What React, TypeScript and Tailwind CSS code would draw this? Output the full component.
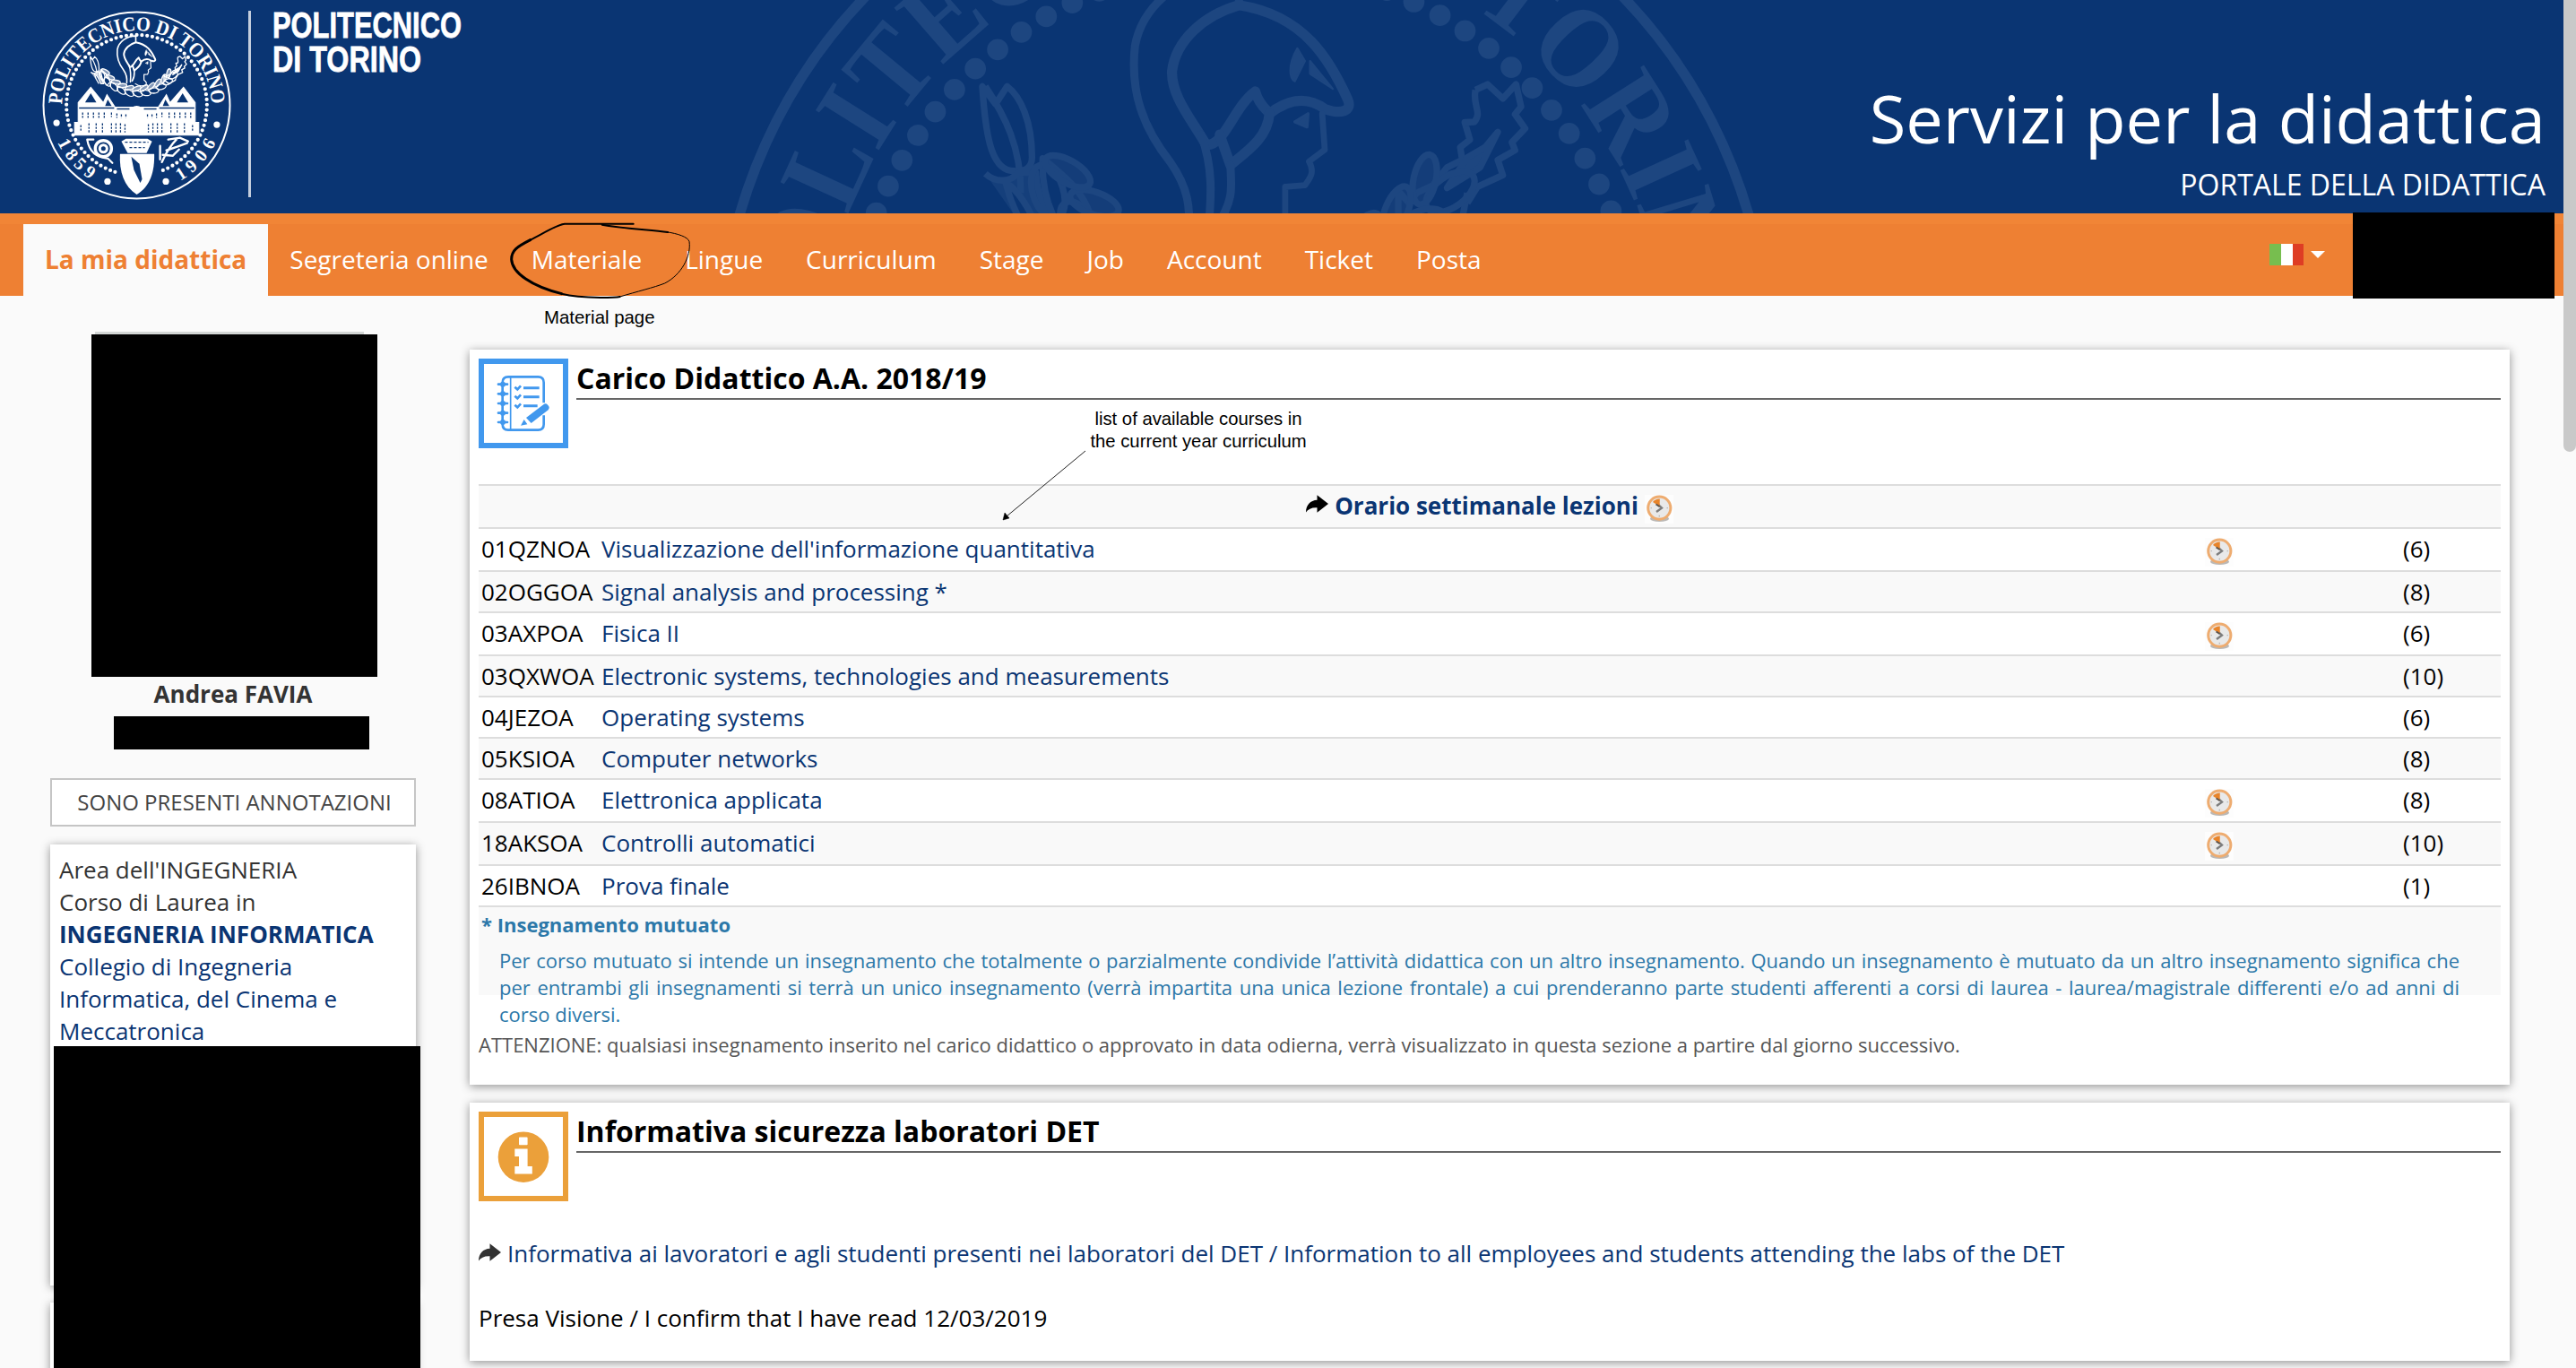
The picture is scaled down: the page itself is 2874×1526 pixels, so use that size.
import type { ReactNode } from "react";

const NAV = [
  "Segreteria online",
  "Materiale",
  "Lingue",
  "Curriculum",
  "Stage",
  "Job",
  "Account",
  "Ticket",
  "Posta",
];

type Course = { code: string; name: string; credits: number; clock?: boolean };

const COURSES: Course[] = [
  { code: "01QZNOA", name: "Visualizzazione dell'informazione quantitativa", credits: 6, clock: true },
  { code: "02OGGOA", name: "Signal analysis and processing *", credits: 8 },
  { code: "03AXPOA", name: "Fisica II", credits: 6, clock: true },
  { code: "03QXWOA", name: "Electronic systems, technologies and measurements", credits: 10 },
  { code: "04JEZOA", name: "Operating systems", credits: 6 },
  { code: "05KSIOA", name: "Computer networks", credits: 8 },
  { code: "08ATIOA", name: "Elettronica applicata", credits: 8, clock: true },
  { code: "18AKSOA", name: "Controlli automatici", credits: 10, clock: true },
  { code: "26IBNOA", name: "Prova finale", credits: 1 },
];

const DIGITS: [string, number][] = [
  ["1", 152],
  ["8", 143],
  ["5", 134],
  ["9", 125],
  ["1", 57],
  ["9", 48],
  ["0", 38],
  ["6", 28],
];

const LEAVES = Array.from({ length: 11 }, (_, i) => 36 + i * 10.8);

/* Full seal, or only its upper half when used as a cropped watermark. */
function Seal({ className, id, background, upper = false }: { className: string; id: string; background: string; upper?: boolean }) {
  return (
    <svg viewBox="-106 -106 212 212" className={className} fill="none" stroke="currentColor">
      <defs>
        <path id={id} d="M-83 0A83 83 0 0 1 83 0" />
      </defs>
      <circle r="103.5" strokeWidth="2" />
      <path d="M-24 74A78 78 0 1 1 24 74" strokeWidth="4.2" strokeLinecap="round" strokeDasharray="0 5.8" />
      <text fill="currentColor" stroke="none" fontSize="22.5" fontWeight="600" fontFamily="'Liberation Serif', serif">
        <textPath href={"#" + id} startOffset="1" textLength="258" lengthAdjust="spacingAndGlyphs">
          POLITECNICO DI TORINO
        </textPath>
      </text>

      {/* helmeted head */}
      <g strokeWidth="1.6" strokeLinejoin="round" strokeLinecap="round">
        <path d="M-1 -70V-77C-12 -77 -20 -70 -21.5 -62C-22.5 -53 -20 -46 -14.5 -39C-11 -34 -10.5 -30 -11 -25" />
        <path d="M-1 -70C-8 -68 -13.5 -63 -14.2 -57C-14.4 -52 -10 -47 -7.5 -42.5C-4 -42 -2 -50 2.2 -53C3 -50 5 -49 5 -48.6C8 -51 12 -52.5 16 -49.5C19 -48.5 21.5 -49 20.4 -51.5C17 -59 12 -68 -1 -70Z" strokeWidth="2" />
        <path d="M-4.8 -44.5L-2.7 -38.5C1 -41.5 4.6 -44 5 -48.6" strokeWidth="2" />
        <path d="M15.4 -48.6L15.9 -41.5L12.8 -39.2C14 -37 13 -36 12 -34.5L8.1 -34.2V-28C11 -26 12 -24 9 -22C5 -21 1 -22 -1.5 -24" strokeWidth="1.2" />
        <path d="M-8.5 -44.5C-6 -38 -6.5 -32 -7 -26M-2.7 -38.5C-2.5 -34 -2 -32 -5 -27" />
        <path d="M10.5 -61.5C8.5 -58 9 -55.5 10 -55L12 -59ZM13 -59L17.5 -53.5L13 -56.5Z" fill="currentColor" strokeWidth="0.4" />
        <path d="M10 -47L12.6 -48.6L12.4 -46Z" fill="currentColor" strokeWidth="0.6" />
      </g>

      {/* laurel and oak branches */}
      <g strokeWidth="1.3" strokeLinejoin="round">
        <path d="M-51.6 -54C-51 -45 -50 -38 -46 -37.4C-43 -37 -41.8 -38 -41.8 -40C-41.8 -47 -44 -52 -46.7 -54L-49 -50.5ZM-51 -54C-47 -48 -44 -42 -44 -33" />
        <path d="M-51 -36.8C-49 -35 -46 -35 -44.5 -37L-41 -37C-41 -33 -39 -29 -36.5 -24L-40 -24C-42 -30 -45 -34 -47 -35C-46 -31 -44 -27 -42 -24" fill="currentColor" fillOpacity="0.6" />
        <path d="M-39.7 -39.8C-35 -36 -31 -33 -29.5 -26L-33 -22C-38 -27 -40 -33 -39.7 -39.8Z" />
        <path d="M45.6 -53.3L48 -54.4L51 -51.6L53.6 -54.4L54.6 -50L53.4 -48.5L55.4 -45.7L52.8 -43L53.4 -41.4L50 -39.5L51 -36.5L46 -34.2L44 -31M45.6 -53.3C45 -50 47 -49 45.4 -47L43.5 -46.9L44.5 -43.5L42.6 -42L43 -39.5L40 -38L37.2 -34.5L34 -33L32.5 -31L30.4 -33.4V-28L36 -24L43 -28L44 -33" />
        <path d="M50 -45L46.5 -38L40 -34L44 -40L47.5 -42Z" fill="currentColor" />
        {LEAVES.map((a) => (
          <g key={a} transform={`translate(1 -62) rotate(${a})`}>
            <ellipse cx="49" cy="0" rx="3" ry="5.5" transform="rotate(18 49 0)" />
            <ellipse cx="43.5" cy="1" rx="2.2" ry="5" transform="rotate(-24 43.5 1)" fill="currentColor" fillOpacity="0.5" />
          </g>
        ))}
      </g>

      {!upper && (
        <>
          {DIGITS.map(([d, a]) => (
            <text
              key={d + a}
              transform={`rotate(${a - 90}) translate(0 97)`}
              textAnchor="middle"
              fill="currentColor"
              stroke="none"
              fontSize="20"
              fontWeight="700"
              fontFamily="'Liberation Serif', serif"
            >
              {d}
            </text>
          ))}
          <g fill="currentColor" stroke="none">
            <circle cx="-89" cy="19.5" r="3.6" />
            <circle cx="89" cy="21.5" r="3.6" />
            <circle cx="-32.4" cy="84.5" r="3.6" />
            <circle cx="32.4" cy="84.5" r="3.6" />
          </g>

          {/* castle */}
          <g fill="currentColor" strokeWidth="1">
            <path d="M-69 33V19H-65V-3L-51 -20L-37 -3L-33 -12L-24 2H24L33 -12L37 -3L52 -20L65 -3V19H69V33Z" />
            <path
              d="M-56 -4L-51 -12L-46 -4ZM-34 0L-32 -5L-29 0ZM46 -4L51 -12L56 -4ZM30 0L32 -5L35 0ZM-22 4H-8M8 4H22M-64 3H-25M25 3H64"
              fill={background}
              stroke={background}
              strokeWidth="1.4"
            />
            <path
              d="M-60 8V14M-54 8V14M-48 8V14M-42 8V14M-36 8V14M-28 8V13M-22 9V14M-17 10V14M-12 10V14M12 10V14M17 10V14M22 9V14M28 8V13M36 8V14M42 8V14M48 8V14M54 8V14M60 8V14M-62 22V29M-53 20V30M-45 20V30M-38 20V30M-28 20V30M-23 20V30M-18 20V30M-13 21V30M13 21V30M18 20V30M23 20V30M28 20V30M38 20V30M45 20V30M53 20V30M62 22V29"
              stroke={background}
              strokeWidth="1.3"
              strokeDasharray="2.4 1.4"
            />
            <circle cy="8" r="7.5" stroke="none" />
          </g>

          {/* snail, shield and wheat */}
          <g strokeWidth="2.2" strokeLinecap="round">
            <path d="M-55 38C-53 50 -46 58 -32 59L-27 64M-55 38H-48" />
            <circle cx="-37" cy="48" r="9" strokeWidth="3.4" />
            <circle cx="-37" cy="48" r="4" strokeWidth="3" />
          </g>
          <path d="M-17 40L-10 53H11L17 40L12 37H-12Z" fill="currentColor" stroke="none" />
          <path d="M-13 41H13M-8 47H9" stroke={background} strokeWidth="1.2" strokeDasharray="3 2" />
          <path d="M-18.5 54H19.5C20 74 15 90 0 99C-14 90 -19.5 74 -18.5 54Z" fill="currentColor" stroke="none" />
          <path d="M-6 57L3 65L6 82L4 86L-3 72Z" fill={background} stroke="none" />
          <path d="M28 63C32 54 38 44 45 37M26 60V45M29 55L40 56L47 49M33 50L45 46L56 42M35 38L48 36L57 40" strokeWidth="2.4" strokeLinecap="round" />
        </>
      )}
    </svg>
  );
}

function ClockIcon({ className = "" }: { className?: string }) {
  return (
    <svg viewBox="0 0 32 32" className={`h-8 w-8 shrink-0 bg-[#fdfdfd] ${className}`} fill="none">
      <ellipse cx="16.5" cy="26.5" rx="10.5" ry="3.6" fill="#8f8a86" opacity="0.6" />
      <circle cx="16.3" cy="14.6" r="12.6" fill="#e9e9e9" stroke="#eeac70" strokeWidth="3" />
      <path d="M14 10L19 14.6L13 19" stroke="#7d7d7d" strokeWidth="2.4" />
      <path d="M16.6 13L9 8C10.5 5.4 14 4.2 16.8 4.4Z" fill="#e8842a" />
      <path d="M12.5 10.5L16.5 13" stroke="#5a5048" strokeWidth="1.8" />
      <path d="M24.5 14.6H26M16.3 22.8V24.4M6.6 14.6H8" stroke="#bbb" strokeWidth="1.4" />
    </svg>
  );
}

function ShareArrow({ className }: { className: string }) {
  return (
    <svg viewBox="50 36 76 60" className={`h-5 w-[25px] shrink-0 ${className}`} fill="currentColor">
      <path d="M88 36L126 66L88 96V79C70 78 57 84 50 95C50 70 65 54 88 53Z" />
    </svg>
  );
}

function NotebookIcon() {
  return (
    <svg viewBox="30 510 264 264" className="h-full w-full" fill="none" stroke="currentColor">
      <path d="M230 640V572Q230 553 211 553H111Q92 553 92 572V712Q92 731 111 731H211Q230 731 230 712V682" strokeWidth="8" />
      <path d="M119 553V731" strokeWidth="5" />
      {[578, 610, 642, 674, 705].map((y) => (
        <g key={y}>
          <ellipse cx="93" cy={y} rx="9" ry="9" fill="currentColor" stroke="none" />
          <path d={`M78 ${y}H108`} strokeWidth="8" strokeLinecap="round" />
        </g>
      ))}
      <path d="M162 590H215M162 620H215M162 650H209" strokeWidth="9" />
      <path d="M133 587L142 595L153 583M133 617L142 625L153 613M133 647L142 655L153 643" strokeWidth="8" />
      <path
        d="M171 690L230 645Q237 640 242 646L247 652Q251 658 245 664L188 708ZM164 696L175 712L153 716Z"
        fill="currentColor"
        stroke="none"
      />
    </svg>
  );
}

function InfoIcon() {
  return (
    <svg viewBox="0 0 88 88" className="h-full w-full">
      <circle cx="44" cy="44.7" r="28.3" fill="currentColor" />
      <path
        d="M39.8 22.5H47.8Q48.6 22.5 48.6 23.3V30.5Q48.6 31.3 47.8 31.3H39.8Q39 31.3 39 30.5V23.3Q39 22.5 39.8 22.5ZM34.3 35.5H48.6V55H53.8V63.6H34.3V55H39V44H34.3Z"
        fill="#fff"
      />
    </svg>
  );
}

function Card({ className = "", children }: { className?: string; children?: ReactNode }) {
  return <section className={`bg-white shadow-[0_2px_10px_rgba(0,0,0,0.42)] ${className}`}>{children}</section>;
}

function CardHeader({ title, tone, icon }: { title: string; tone: string; icon: ReactNode }) {
  return (
    <div className="flex gap-[9px]">
      <div className={`h-[100px] w-[100px] shrink-0 border-[6px] ${tone}`}>{icon}</div>
      <h2 className="h-[46px] grow border-b-2 border-[#666] text-[32px] leading-[44px] font-bold text-black">{title}</h2>
    </div>
  );
}

export default function App() {
  return (
    <div className="relative flex h-[1526px] w-[2874px] overflow-hidden bg-[#fafafa] font-['Open_Sans',sans-serif] text-[26px] text-[#333]">
      <div className="flex w-[2860px] shrink-0 flex-col">
        <header className="relative flex h-[238px] shrink-0 overflow-hidden bg-[#0a3573] text-white">
          <Seal
            id="ring-large"
            background="#0a3573"
            upper
            className="absolute top-[-198px] left-[788px] h-[1200px] w-[1200px] text-[#1d4680]"
          />
          <Seal id="ring-small" background="#0a3573" className="mt-[11px] ml-[46px] h-[213px] w-[213px] shrink-0" />
          <div className="mt-3 ml-[18px] h-[208px] w-[3px] shrink-0 bg-[#c3cddd]" />
          <svg viewBox="0 0 230 90" className="ml-[23px] h-[90px] w-[230px] shrink-0" fill="currentColor" stroke="currentColor" strokeWidth="0.8">
            <g fontFamily="'Liberation Sans', sans-serif" fontWeight="700" fontSize="41">
              <text x="1" y="42.3" textLength="211" lengthAdjust="spacingAndGlyphs">
                POLITECNICO
              </text>
              <text x="1" y="80.3" textLength="166" lengthAdjust="spacingAndGlyphs">
                DI TORINO
              </text>
            </g>
          </svg>
          <div className="relative flex grow flex-col items-end justify-end pr-5 pb-2">
            <h1 className="text-[74px] leading-[100px]">Servizi per la didattica</h1>
            <p className="text-[32px] leading-[48px]">PORTALE DELLA DIDATTICA</p>
          </div>
        </header>

        <nav className="flex h-[92px] shrink-0 flex-col bg-[#ee8033]">
          <div className="h-3 shrink-0 bg-[#f18536]" />
          <div className="flex h-20 items-stretch pl-[26px] text-[28px] leading-[78px] text-white">
            <a className="bg-[#fafafa] px-6 font-bold text-[#ee8033]">La mia didattica</a>
            {NAV.map((item) => (
              <a key={item} className="px-6">
                {item}
              </a>
            ))}
            <div className="ml-auto flex items-start">
              <div className="mt-[22px] flex h-6 w-[38px]">
                <span className="grow bg-[#77be4f]" />
                <span className="w-[13px] bg-white" />
                <span className="w-3 bg-[#de3d24]" />
              </div>
              <svg viewBox="0 0 16 8" className="mt-[30px] ml-2 h-2 w-4" fill="#fff">
                <path d="M0 0H16L8 8Z" />
              </svg>
              <div className="relative z-10 mt-[-13px] mr-2.5 ml-[31px] h-[96px] w-[225px] bg-black" />
            </div>
          </div>
        </nav>

        <div className="flex grow items-start">
          <aside className="ml-14 flex w-[408px] shrink-0 flex-col pt-10">
            <div className="ml-[50px] h-[3px] w-[300px] bg-[#d3d6d5]" />
            <div className="ml-[46px] h-[382px] w-[319px] bg-black" />
            <p className="mt-px text-center leading-9 font-bold">Andrea FAVIA</p>
            <div className="mt-[7px] ml-[71px] h-[37px] w-[285px] bg-black" />
            <button className="mt-8 h-[54px] border-2 border-[#c5c5c5] bg-white pl-[3px] text-[24px] leading-[50px] text-[#444]">
              SONO PRESENTI ANNOTAZIONI
            </button>
            <Card className="relative mt-5 h-[492px] p-2.5">
              <p className="leading-9">
                Area dell'INGEGNERIA
                <br />
                Corso di Laurea in
                <br />
                <a className="font-bold text-[#0a3573]">INGEGNERIA INFORMATICA</a>
                <br />
                <a className="text-[#0a3573]">Collegio di Ingegneria Informatica, del Cinema e Meccatronica</a>
              </p>
              <div className="absolute top-[225px] left-1 z-10 h-[400px] w-[409px] bg-black" />
            </Card>
            <Card className="mt-[19px] h-[200px]" />
          </aside>

          <main className="ml-[60px] flex w-[2276px] shrink-0 flex-col gap-5 pt-[60px]">
            <Card className="h-[820px] p-2.5">
              <CardHeader title="Carico Didattico A.A. 2018/19" tone="border-[#4198ee] text-[#4198ee]" icon={<NotebookIcon />} />
              <div className="mt-10">
                <div className="flex h-12 items-start justify-center gap-[7px] border-t-2 border-[#ddd] bg-[#f9f9f9]">
                  <ShareArrow className="mt-2.5 text-black" />
                  <a className="leading-[44px] font-bold text-[#0a3573]">Orario settimanale lezioni</a>
                  <ClockIcon className="mt-2.5" />
                </div>
                {COURSES.map((c, i) => (
                  <div
                    key={c.code}
                    className={`grid grid-cols-[134px_1789px_221px_1fr] items-start border-t-2 border-[#ddd] pl-[3px] leading-[44px] text-black ${
                      c.clock ? "h-12" : "h-[46px]"
                    } ${i % 2 ? "bg-[#f9f9f9]" : "bg-white"}`}
                  >
                    <span>{c.code}</span>
                    <a className="text-[#0a3573]">{c.name}</a>
                    <span>{c.clock && <ClockIcon className="mt-2.5" />}</span>
                    <span>({c.credits})</span>
                  </div>
                ))}
                <div className="h-[100px] border-t-2 border-[#ddd] bg-[#f9f9f9] text-[22px] text-[#2c78a9]">
                  <p className="pl-[3px] leading-[38px] font-bold">* Insegnamento mutuato</p>
                  <p className="mt-1.5 mr-[46px] ml-[23px] text-justify leading-[30px]">
                    Per corso mutuato si intende un insegnamento che totalmente o parzialmente condivide l’attività didattica con un
                    altro insegnamento. Quando un insegnamento è mutuato da un altro insegnamento significa che per entrambi gli
                    insegnamenti si terrà un unico insegnamento (verrà impartita una unica lezione frontale) a cui prenderanno parte
                    studenti afferenti a corsi di laurea - laurea/magistrale differenti e/o ad anni di corso diversi.
                  </p>
                </div>
                <p className="mt-[41px] text-[22px] leading-[29px] text-[#555]">
                  ATTENZIONE: qualsiasi insegnamento inserito nel carico didattico o approvato in data odierna, verrà visualizzato in
                  questa sezione a partire dal giorno successivo.
                </p>
              </div>
            </Card>

            <Card className="h-[288px] p-2.5">
              <CardHeader title="Informativa sicurezza laboratori DET" tone="border-[#eba03a] text-[#eba03a]" icon={<InfoIcon />} />
              <div className="mt-10 flex gap-[7px] leading-9">
                <ShareArrow className="mt-[7px] text-[#333]" />
                <a className="text-[#0a3573]">
                  Informativa ai lavoratori e agli studenti presenti nei laboratori del DET / Information to all employees and
                  students attending the labs of the DET
                </a>
              </div>
              <p className="mt-9 leading-9 text-black">Presa Visione / I confirm that I have read 12/03/2019</p>
            </Card>
          </main>
        </div>
      </div>

      <div className="h-[504px] w-3.5 rounded-b-full bg-[#c9c9c9]" />

      {/* hand-made annotations laid over the page */}
      <svg viewBox="0 0 810 300" className="absolute top-[236px] left-[530px] z-20 h-[100px] w-[270px]" fill="none" stroke="#000" strokeLinecap="round">
        <path d="M530 41H300C275 43 225 75 185 95" strokeWidth="6" />
        <path d="M185 95C140 118 122 130 122 160C124 205 190 250 290 275" strokeWidth="9" />
        <path d="M290 275C330 285 370 287 420 288C440 288 470 288 485 285" strokeWidth="6" />
        <path d="M485 285C540 268 600 254 635 240C690 212 724 150 717 100C712 85 680 74 640 68" strokeWidth="3" />
        <path d="M645 69C590 60 520 60 425 44" strokeWidth="6" />
      </svg>
      <p className="absolute top-[342px] left-[607px] font-['Liberation_Sans',sans-serif] text-[20.4px] leading-[25px] text-black">
        Material page
      </p>
      <p className="absolute top-[455px] left-[1207px] w-[260px] text-center font-['Liberation_Sans',sans-serif] text-[20.3px] leading-[25px] text-black">
        list of available courses in
        <br />
        the current year curriculum
      </p>
      <svg viewBox="0 0 100 84" className="absolute top-[500px] left-[1115px] h-[84px] w-[100px]" fill="none" stroke="#222">
        <path d="M96 3L8 76" strokeWidth="1" />
        <path d="M4 80L6 72L11 78Z" fill="#000" stroke="#000" strokeWidth="0.5" />
      </svg>
    </div>
  );
}
